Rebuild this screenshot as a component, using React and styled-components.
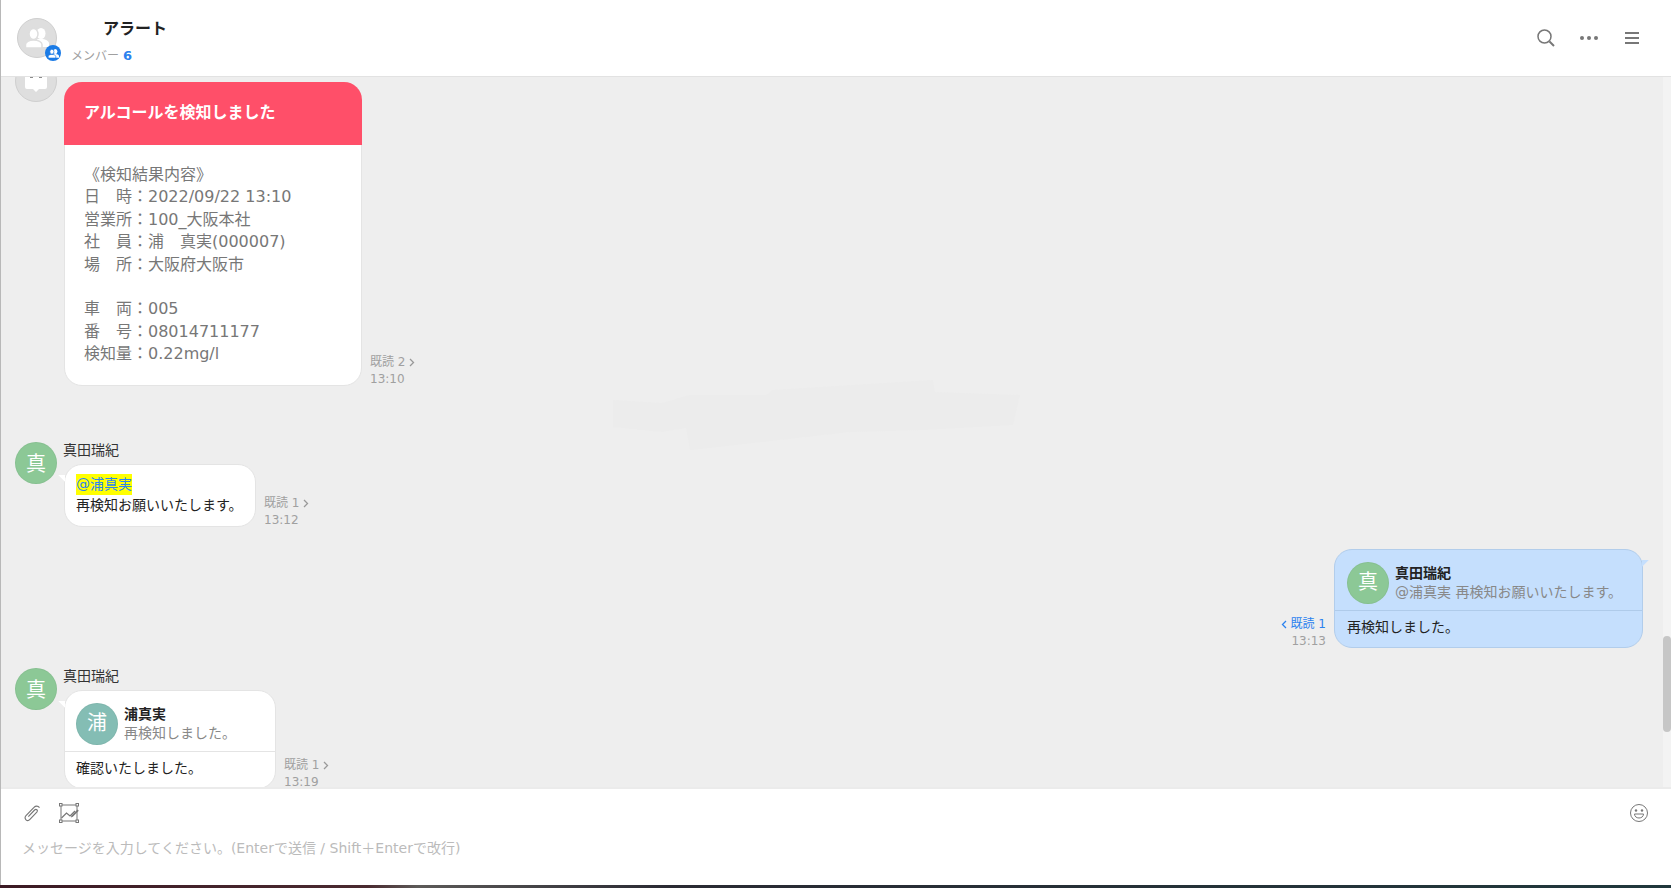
import styled, { createGlobalStyle } from "styled-components";

const GlobalStyle = createGlobalStyle`
  html, body {
    margin: 0;
    padding: 0;
    height: 100%;
    overflow: hidden;
    background: #fff;
  }
  body {
    font-family: "DejaVu Sans", "Noto Sans CJK JP", sans-serif;
  }
  #root {
    height: 100%;
  }
`;

const Page = styled.div`
  display: flex;
  flex-direction: column;
  height: 888px;
  border-left: 1px solid #b8b8b8;
  box-sizing: border-box;
`;

const Header = styled.header`
  flex: 0 0 77px;
  box-sizing: border-box;
  display: flex;
  align-items: flex-start;
  padding: 18px 27px 0 16px;
  background: #fff;
  border-bottom: 1px solid #e2e2e2;
`;

const RoomAvatar = styled.div`
  position: relative;
  width: 40px;
  height: 40px;
  box-sizing: border-box;
  border-radius: 50%;
  background: #dedede;
  border: 1px solid #cfcfcf;
  display: flex;
  align-items: center;
  justify-content: center;
`;

const RoomBadge = styled.div`
  position: absolute;
  right: -5px;
  bottom: -4px;
  width: 16px;
  height: 16px;
  border-radius: 50%;
  background: #1a7be6;
  display: flex;
  align-items: center;
  justify-content: center;
`;

const RoomInfo = styled.div`
  margin-left: 14px;
  display: flex;
  flex-direction: column;
`;

const RoomTitle = styled.div`
  margin: 0 0 0 32px;
  font-size: 16px;
  line-height: 21px;
  font-weight: 700;
  color: #222;
`;

const RoomMembers = styled.div`
  margin-top: 8px;
  font-size: 12px;
  line-height: 18px;
  color: #a0a0a0;

  b {
    margin-left: 4px;
    font-size: 13px;
    color: #2b82ee;
    font-weight: 700;
  }
`;

const HeaderTools = styled.div`
  margin-left: auto;
  display: flex;
  align-items: center;
  gap: 19px;
  height: 39px;
`;

const ToolIcon = styled.svg`
  display: block;
  flex: none;
  color: #777;
`;

const EmojiIcon = styled(ToolIcon)`
  margin-left: auto;
`;

const Middle = styled.div`
  flex: 1;
  min-height: 0;
  display: flex;
`;

const MessageList = styled.main`
  position: relative;
  flex: 1;
  min-width: 0;
  overflow: hidden;
  background: #eee;
  padding: 0 20px 0 14px;
  display: flex;
  flex-direction: column;
`;

const Watermark = styled.svg`
  position: absolute;
  left: 612px;
  top: 303px;
  pointer-events: none;
`;

const ScrollTrack = styled.div`
  flex: 0 0 8px;
  background: #f3f3f3;
`;

const ScrollThumb = styled.div`
  margin-top: 559px;
  height: 96px;
  background: #c6c6c6;
  border-radius: 4px;
`;

const Row = styled.div`
  position: relative;
  flex: none;
  display: flex;
  align-items: flex-start;
  justify-content: ${(p) => (p.$mine ? "flex-end" : "flex-start")};
  margin-top: ${(p) => p.$top}px;
`;

const Avatar = styled.div`
  flex: none;
  width: 42px;
  height: 42px;
  box-sizing: border-box;
  border-radius: 50%;
  background: ${(p) => p.$color};
  border: 1px solid rgba(0, 0, 0, 0.04);
  color: #fff;
  font-size: 20px;
  display: flex;
  align-items: center;
  justify-content: center;
`;

const BotAvatar = styled(Avatar)`
  background: #dedede;
  border-color: #cfcfcf;
`;

const Body = styled.div`
  margin-left: 7px;
  display: flex;
  flex-direction: column;
`;

const SenderName = styled.div`
  height: 14px;
  margin: 1px 0 7px -1px;
  font-size: 14px;
  line-height: 14px;
  color: #333;
`;

const BubbleLine = styled.div`
  display: flex;
  align-items: flex-end;
  flex-direction: ${(p) => (p.$mine ? "row-reverse" : "row")};
  gap: 8px;
`;

const Bubble = styled.div`
  position: relative;
  box-sizing: border-box;
  width: ${(p) => p.$width}px;
  border-radius: 18px;
  border: 1px solid ${(p) => (p.$mine ? "#b2cdeb" : "#e4e4e4")};
  background: ${(p) => (p.$mine ? "#c5dffd" : "#fff")};
  font-size: 14px;
  line-height: 21px;
  color: #222;

  &::before {
    content: "";
    position: absolute;
    top: 10px;
    width: 7px;
    height: 7px;
    background: ${(p) => (p.$mine ? "#c5dffd" : "#fff")};
    ${(p) =>
      p.$mine
        ? "right: -7px; clip-path: polygon(0 0, 100% 0, 0 100%);"
        : "left: -7px; clip-path: polygon(0 0, 100% 0, 100% 100%);"}
  }
`;

const AlertBubble = styled(Bubble)`
  &::before {
    display: none;
  }
`;

const AlertHead = styled.div`
  height: 63px;
  box-sizing: border-box;
  margin: -1px -1px 0;
  padding: 0 0 3px 20px;
  display: flex;
  align-items: center;
  border-radius: 18px 18px 0 0;
  background: #ff4f69;
  color: #fff;
  font-size: 16px;
  font-weight: 700;
`;

const AlertText = styled.div`
  padding: 19px 19px 19px;
  font-size: 16px;
  line-height: 22.4px;
  color: #777;
  white-space: pre-line;
`;

const PlainText = styled.div`
  padding: 9px 12px 10px 11px;
  white-space: nowrap;
`;

const Mention = styled.span`
  display: inline-block;
  line-height: 21px;
  background: #ffff00;
  color: #2b86f0;
`;

const Quote = styled.div`
  display: flex;
  align-items: center;
  gap: 6px;
  padding: 12px 12px 6px ${(p) => (p.$mine ? 12 : 11)}px;
  border-bottom: 1px solid ${(p) => (p.$mine ? "#afcbea" : "#e4e4e4")};
`;

const QuoteName = styled.div`
  font-weight: 700;
  font-size: 14px;
  line-height: 19px;
  color: #222;
`;

const QuoteText = styled.div`
  font-size: 14px;
  line-height: 19px;
  color: #888;
  white-space: nowrap;
`;

const ReplyBody = styled.div`
  padding: 6px 12px 9px ${(p) => (p.$mine ? 12 : 11)}px;
`;

const Meta = styled.div`
  margin-bottom: -2px;
  font-size: 12px;
  line-height: 17px;
  color: #a0a0a0;
  text-align: ${(p) => (p.$mine ? "right" : "left")};
  white-space: nowrap;
`;

const ReadLink = styled.div`
  display: flex;
  align-items: center;
  gap: 4px;
  color: ${(p) => (p.$mine ? "#2b82ee" : "#a0a0a0")};
`;

const Composer = styled.footer`
  flex: 0 0 98px;
  box-sizing: border-box;
  border-top: 2px solid #ebebeb;
  background: #fff;
  padding: 13px 22px 0 21px;
`;

const ComposerTools = styled.div`
  display: flex;
  align-items: center;
  height: 22px;
  gap: 17px;
`;

const Placeholder = styled.div`
  margin-top: 14px;
  font-size: 14px;
  line-height: 20px;
  color: #bbb;
  white-space: nowrap;
`;

const Strip = styled.div`
  flex: 0 0 3px;
  margin-left: -1px;
  background: linear-gradient(90deg, #3c1a24 0%, #4a2a30 22%, #5c5a58 25%, #2a2a33 40%, #20383c 100%);
`;

const People = ({ size, line }) => (
  <svg width={size} height={size} viewBox="0 0 24 24" fill="#fff">
    <ellipse cx="16" cy="7.500" rx="4.500" ry="5.500" />
    <path d="M16 13c4.500 0 8 2 8 4.500V21H12v-8z" />
    <g stroke={line} strokeWidth="1.500">
      <ellipse cx="8.500" cy="8" rx="4.500" ry="5.500" />
      <path d="M8.500 14c-4.500 0-8 2-8 4.500V22H17v-3.500c0-2.500-3.500-4.500-8.500-4.500z" />
    </g>
  </svg>
);

const ReadChevron = ({ left, color = "#999" }) => (
  <svg width="6" height="9" viewBox="0 0 6 9" fill="none" stroke={color} strokeWidth="1.300">
    <path d={left ? "M5 1 1.500 4.500 5 8" : "M1 1 4.500 4.500 1 8"} />
  </svg>
);

const ALERT_TEXT = `《検知結果内容》
日　時：2022/09/22 13:10
営業所：100_大阪本社
社　員：浦　真実(000007)
場　所：大阪府大阪市

車　両：005
番　号：08014711177
検知量：0.22mg/l`;

export default function App() {
  return (
    <>
      <GlobalStyle />
      <Page>
        <Header>
          <RoomAvatar>
            <People size={24} line="#dedede" />
            <RoomBadge>
              <People size={11} line="#1a7be6" />
            </RoomBadge>
          </RoomAvatar>
          <RoomInfo>
            <RoomTitle>アラート</RoomTitle>
            <RoomMembers>
              メンバー<b>6</b>
            </RoomMembers>
          </RoomInfo>
          <HeaderTools>
            <ToolIcon width="24" height="24" viewBox="0 0 24 24" fill="none" stroke="currentColor">
              <circle cx="10.500" cy="10.500" r="6.500" strokeWidth="1.500" />
              <path d="m15.500 15.500 4.500 4.500" strokeWidth="2" />
            </ToolIcon>
            <ToolIcon width="24" height="24" viewBox="0 0 24 24" fill="currentColor">
              <circle cx="5" cy="12" r="2" />
              <circle cx="12" cy="12" r="2" />
              <circle cx="19" cy="12" r="2" />
            </ToolIcon>
            <ToolIcon width="24" height="24" viewBox="0 0 24 24" fill="currentColor">
              <rect x="5" y="6" width="14" height="2" />
              <rect x="5" y="11" width="14" height="2" />
              <rect x="5" y="16" width="14" height="2" />
            </ToolIcon>
          </HeaderTools>
        </Header>

        <Middle>
          <MessageList>
            <Watermark width="420" height="76" viewBox="0 0 420 76" fill="#ececec">
              <path d="M0 20 48 23 77 15 153 15 160 10 320 0 322 12 407 15 400 45 310 50 237 52 77 70 73 48 48 52 0 47Z" />
            </Watermark>

            <Row $top={-17}>
              <BotAvatar $color="#dedede">
                <svg width="22" height="40" viewBox="0 0 22 40" fill="#fff">
                  <path d="M2 10h18a2 2 0 0 1 2 2v14a2 2 0 0 1-2 2h-6l-3 3-3-3H2a2 2 0 0 1-2-2V12a2 2 0 0 1 2-2z" />
                  <rect x="5" y="15" width="3" height="2" fill="#8a8a8a" />
                  <rect x="14" y="15" width="3" height="2" fill="#8a8a8a" />
                </svg>
              </BotAvatar>
              <Body>
                <SenderName />
                <BubbleLine>
                  <AlertBubble $width={298}>
                    <AlertHead>アルコールを検知しました</AlertHead>
                    <AlertText>{ALERT_TEXT}</AlertText>
                  </AlertBubble>
                  <Meta>
                    <ReadLink>
                      既読 2 <ReadChevron />
                    </ReadLink>
                    13:10
                  </Meta>
                </BubbleLine>
              </Body>
            </Row>

            <Row $top={56}>
              <Avatar $color="#8cc896">真</Avatar>
              <Body>
                <SenderName>真田瑞紀</SenderName>
                <BubbleLine>
                  <Bubble $width={192}>
                    <PlainText>
                      <Mention>@浦真実</Mention>
                      <br />
                      再検知お願いいたします。
                    </PlainText>
                  </Bubble>
                  <Meta>
                    <ReadLink>
                      既読 1 <ReadChevron />
                    </ReadLink>
                    13:12
                  </Meta>
                </BubbleLine>
              </Body>
            </Row>

            <Row $mine $top={22}>
              <BubbleLine $mine>
                <Bubble $mine $width={309}>
                  <Quote $mine>
                    <Avatar $color="#8cc896">真</Avatar>
                    <div>
                      <QuoteName>真田瑞紀</QuoteName>
                      <QuoteText>@浦真実 再検知お願いいたします。</QuoteText>
                    </div>
                  </Quote>
                  <ReplyBody $mine>再検知しました。</ReplyBody>
                </Bubble>
                <Meta $mine>
                  <ReadLink $mine>
                    <ReadChevron left color="#2b82ee" /> 既読 1
                  </ReadLink>
                  13:13
                </Meta>
              </BubbleLine>
            </Row>

            <Row $top={20}>
              <Avatar $color="#8cc896">真</Avatar>
              <Body>
                <SenderName>真田瑞紀</SenderName>
                <BubbleLine>
                  <Bubble $width={212}>
                    <Quote>
                      <Avatar $color="#84bdb4">浦</Avatar>
                      <div>
                        <QuoteName>浦真実</QuoteName>
                        <QuoteText>再検知しました。</QuoteText>
                      </div>
                    </Quote>
                    <ReplyBody>確認いたしました。</ReplyBody>
                  </Bubble>
                  <Meta>
                    <ReadLink>
                      既読 1 <ReadChevron />
                    </ReadLink>
                    13:19
                  </Meta>
                </BubbleLine>
              </Body>
            </Row>
          </MessageList>
          <ScrollTrack>
            <ScrollThumb />
          </ScrollTrack>
        </Middle>

        <Composer>
          <ComposerTools>
            <ToolIcon width="20" height="20" viewBox="0 0 24 24" fill="none" stroke="currentColor" strokeWidth="1.400">
              <path d="M21 5.500c-1.800-2.300-4.700-2.300-6.600-.2L4.800 15.200c-1.500 1.600-1.500 3.700 0 5 1.400 1.200 3.300 1 4.700-.5l8.300-8.700c.9-1 .9-2.100.1-2.900-.8-.7-1.900-.6-2.800.3l-7.500 7.900" />
            </ToolIcon>
            <ToolIcon width="20" height="20" viewBox="0 0 20 20" fill="none" stroke="currentColor">
              <rect x="2" y="2" width="16" height="16" strokeWidth="1" />
              <path d="m2.500 15 5-5 3.500 3 5-5" strokeWidth="1.200" />
              <path d="m12.500 12.500 6-6 1.300 1.300-6 6-2 .700z" fill="currentColor" stroke="none" />
              <g fill="#fff" strokeWidth="1">
                <rect x="0.500" y="0.500" width="2.500" height="2.500" />
                <rect x="17" y="0.500" width="2.500" height="2.500" />
                <rect x="0.500" y="17" width="2.500" height="2.500" />
                <rect x="17" y="17" width="2.500" height="2.500" />
              </g>
            </ToolIcon>
            <EmojiIcon width="20" height="20" viewBox="0 0 20 20" fill="none" stroke="currentColor" strokeWidth="1">
              <circle cx="10" cy="10" r="8.500" />
              <circle cx="7" cy="7.500" r="1.200" fill="currentColor" stroke="none" />
              <circle cx="13" cy="7.500" r="1.200" fill="currentColor" stroke="none" />
              <path d="M5.500 11h9c0 2.500-2 4-4.500 4s-4.500-1.500-4.500-4z" />
            </EmojiIcon>
          </ComposerTools>
          <Placeholder>メッセージを入力してください。(Enterで送信 / Shift＋Enterで改行)</Placeholder>
        </Composer>
        <Strip />
      </Page>
    </>
  );
}
